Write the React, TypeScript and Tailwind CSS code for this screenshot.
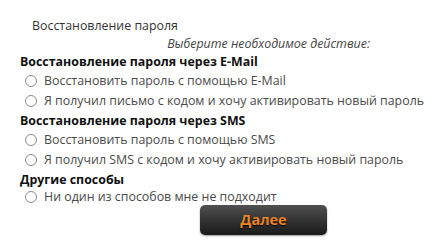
import React from "react";

const Radio = ({ label, h = "h-[20px]" }: { label: string; h?: string }) => (
  <label className={`flex items-center ${h} pl-[25px] text-[#4a4a4a]`}>
    <span className="w-[12px] h-[12px] rounded-full border border-[#8a8a8a] bg-white shrink-0" />
    <span className="ml-[7px] whitespace-nowrap">{label}</span>
  </label>
);

const Heading = ({ children }: { children: React.ReactNode }) => (
  <div className="flex items-center h-[19px] pl-[20px] font-bold text-[#111]">{children}</div>
);

export default function App() {
  return (
    <div
      className="w-[448px] h-[245px] bg-white text-[12.4px] leading-[16px] overflow-hidden"
      style={{ fontFamily: '"Open Sans", "Noto Sans", sans-serif' }}
    >
      <div className="pt-[17px]">
        <div className="flex items-center h-[18px] pl-[32px] text-[#333]">Восстановление пароля</div>
      </div>
      <div className="flex items-center justify-end h-[17px] pr-[78px] italic text-[#444]">
        Выберите необходимое действие:
      </div>
      <Heading>Восстановление пароля через E-Mail</Heading>
      <Radio label="Восстановить пароль с помощью E-Mail" />
      <Radio label="Я получил письмо с кодом и хочу активировать новый пароль" />
      <Heading>Восстановление пароля через SMS</Heading>
      <Radio label="Восстановить пароль с помощью SMS" />
      <Radio label="Я получил SMS с кодом и хочу активировать новый пароль" />
      <Heading>Другие способы</Heading>
      <Radio label="Ни один из способов мне не подходит" h="h-[16px]" />
      <div className="pl-[200px]">
        <button className="w-[127px] h-[30px] rounded-[5px] bg-gradient-to-b from-[#505050] to-[#1a1a1a] text-[#ea8428] font-bold text-[14.5px] leading-[30px] shadow-[0_1px_2px_rgba(0,0,0,0.4)] [text-shadow:0_1px_1px_#000]">
          Далее
        </button>
      </div>
    </div>
  );
}
